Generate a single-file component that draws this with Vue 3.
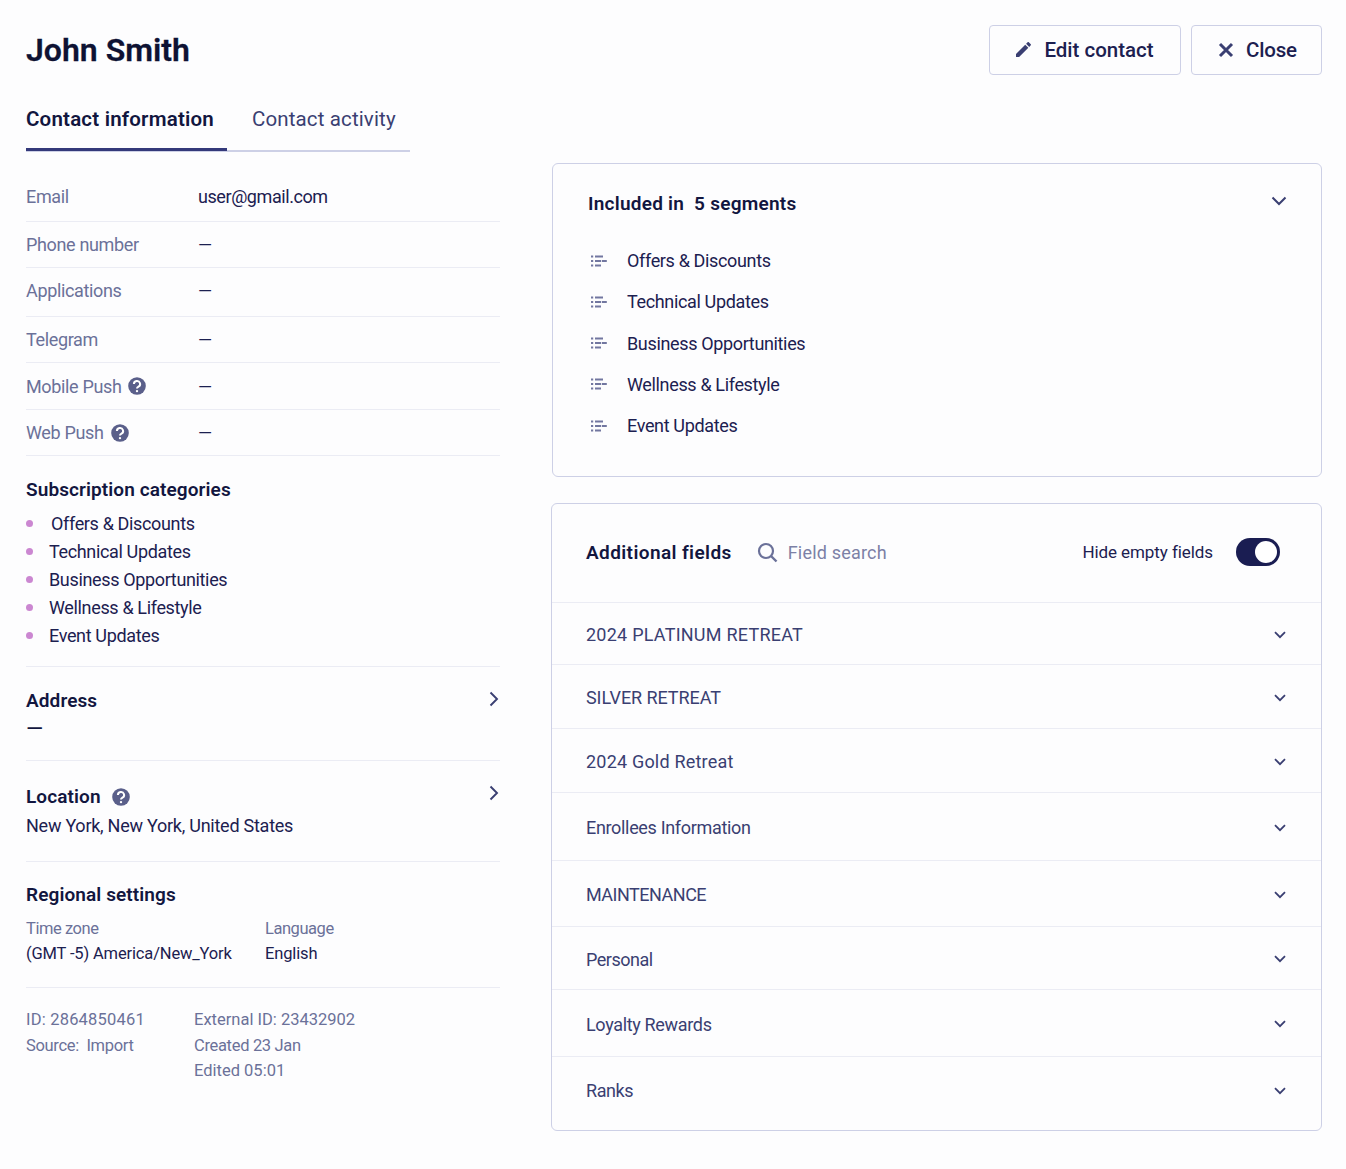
<script setup>
const rows = [
  { label: 'Email', value: 'user@gmail.com', h: 48, pb: 2 },
  { label: 'Phone number', value: '—', h: 46, pb: 0 },
  { label: 'Applications', value: '—', h: 49, pb: 3 },
  { label: 'Telegram', value: '—', h: 46, pb: 0 },
  { label: 'Mobile Push', value: '—', h: 47, pb: 0, help: true },
  { label: 'Web Push', value: '—', h: 46, pb: 0, help: true }
]
const cats = ['Offers & Discounts', 'Technical Updates', 'Business Opportunities', 'Wellness & Lifestyle', 'Event Updates']
const fields = [
  { t: '2024 PLATINUM RETREAT', h: 62, ls: 0.24 },
  { t: 'SILVER RETREAT', h: 64, ls: -0.07 },
  { t: '2024 Gold Retreat', h: 64, ls: 0.2 },
  { t: 'Enrollees Information', h: 68, ls: -0.33 },
  { t: 'MAINTENANCE', h: 66, ls: -0.5 },
  { t: 'Personal', h: 63, ls: -0.5 },
  { t: 'Loyalty Rewards', h: 67, ls: -0.33 },
  { t: 'Ranks', h: 74, ls: -0.4 }
]
</script>

<template>
  <div class="page">
    <header class="top">
      <h1>John Smith</h1>
      <div class="actions">
        <button class="btn edit">
          <svg width="15" height="15" viewBox="3 3 18 18"><path fill="#3a3f72" d="M3 17.25V21h3.75L17.81 9.94l-3.75-3.75L3 17.25zM20.71 7.04c.39-.39.39-1.02 0-1.41l-2.34-2.34c-.39-.39-1.02-.39-1.41 0l-1.83 1.83 3.75 3.75 1.83-1.83z"/></svg>
          Edit contact
        </button>
        <button class="btn close">
          <svg width="16" height="16" viewBox="0 0 16 16"><path d="M2 2l12 12M14 2L2 14" stroke="#3a3f72" stroke-width="3" fill="none"/></svg>
          Close
        </button>
      </div>
    </header>

    <div class="cols">
      <section class="left">
        <nav class="tabs">
          <span class="tab active">Contact information</span>
          <span class="tab">Contact activity</span>
        </nav>

        <div class="rows">
          <div v-for="r in rows" :key="r.label" class="row" :style="{ height: r.h + 'px', paddingBottom: r.pb + 'px' }">
            <span class="label">{{ r.label }}
              <svg v-if="r.help" class="help" width="18" height="18" viewBox="0 0 18 18"><circle cx="9" cy="9" r="8.8" fill="#5a5f8a"/><path d="M5.9 7a3.1 3 0 1 1 4.6 2.6c-1 .6-1.5 1-1.5 2" fill="none" stroke="#fff" stroke-width="2"/><circle cx="9" cy="14.1" r="1.2" fill="#fff"/></svg>
            </span>
            <span class="value">{{ r.value }}</span>
          </div>
        </div>

        <div class="subs">
          <h3>Subscription categories</h3>
          <ul>
            <li v-for="c in cats" :key="c"><i class="dot"></i>{{ c }}</li>
          </ul>
        </div>

        <div class="block address">
          <div class="block-head">
            <h3>Address</h3>
            <svg class="arrow ad" width="10" height="16" viewBox="0 0 10 16"><path d="M1.5 1.5L8 8l-6.5 6.5" fill="none" stroke="#3a3f72" stroke-width="1.9"/></svg>
          </div>
          <div class="dash">—</div>
        </div>

        <div class="block location">
          <div class="block-head">
            <h3>Location
              <svg class="help" width="18" height="18" viewBox="0 0 18 18"><circle cx="9" cy="9" r="8.8" fill="#5a5f8a"/><path d="M5.9 7a3.1 3 0 1 1 4.6 2.6c-1 .6-1.5 1-1.5 2" fill="none" stroke="#fff" stroke-width="2"/><circle cx="9" cy="14.1" r="1.2" fill="#fff"/></svg>
            </h3>
            <svg class="arrow up" width="10" height="16" viewBox="0 0 10 16"><path d="M1.5 1.5L8 8l-6.5 6.5" fill="none" stroke="#3a3f72" stroke-width="1.9"/></svg>
          </div>
          <div class="loc">New York, New York, United States</div>
        </div>

        <div class="block regional">
          <h3>Regional settings</h3>
          <div class="reg-grid">
            <div><div class="small-label">Time zone</div><div class="small-value">(GMT -5) America/New_York</div></div>
            <div><div class="small-label">Language</div><div class="small-value">English</div></div>
          </div>
        </div>

        <div class="meta">
          <div class="meta-col first"><div class="wide">ID: 2864850461</div><div class="tight">Source: &nbsp;Import</div></div>
          <div class="meta-col"><div>External ID: 23432902</div><div class="tight">Created 23 Jan</div><div>Edited 05:01</div></div>
        </div>
      </section>

      <section class="right">
        <div class="card segments">
          <div class="seg-head">
            <h3>Included in &nbsp;5 segments</h3>
            <svg width="16" height="10" viewBox="0 0 16 10"><path d="M1.5 1.5L8 8l6.5-6.5" fill="none" stroke="#3a3f72" stroke-width="2"/></svg>
          </div>
          <ul class="seg-list">
            <li v-for="c in cats" :key="c">
              <svg width="16" height="12" viewBox="0 0 16 12" fill="#7277a0"><rect x="0" y="0.5" width="2.2" height="2"/><rect x="0" y="5" width="2.2" height="2"/><rect x="0" y="9.5" width="2.2" height="2"/><rect x="4" y="0.5" width="8" height="2"/><rect x="4" y="5" width="6" height="2"/><rect x="10.8" y="5" width="5" height="2"/><rect x="4" y="9.5" width="6" height="2"/></svg>
              {{ c }}
            </li>
          </ul>
        </div>

        <div class="card fields">
          <div class="f-head">
            <h3>Additional fields</h3>
            <svg class="search" width="21" height="21" viewBox="0 0 21 21"><circle cx="9" cy="9" r="7" fill="none" stroke="#6b7199" stroke-width="2.2"/><path d="M14 14l5.5 5.5" stroke="#6b7199" stroke-width="2.4"/></svg>
            <span class="placeholder">Field search</span>
            <span class="hide">Hide empty fields</span>
            <span class="toggle"><span class="knob"></span></span>
          </div>
          <div v-for="(f, i) in fields" :key="f.t" class="f-row" :class="{ last: i === fields.length - 1 }" :style="{ height: f.h + 'px', letterSpacing: f.ls + 'px' }">
            <span>{{ f.t }}</span>
            <svg width="12" height="8" viewBox="0 0 12 8"><path d="M1 1.2l5 5 5-5" fill="none" stroke="#3a3f72" stroke-width="1.8"/></svg>
          </div>
        </div>
      </section>
    </div>
  </div>
</template>

<style>
body { background: #fdfdfe; }
</style>

<style scoped>
.page {
  width: 1346px;
  height: 1169px;
  box-sizing: border-box;
  padding: 25px 24px 0 26px;
  font-family: Roboto, "Noto Sans", sans-serif;
  color: #12163f;
  font-size: 18px;
  letter-spacing: -0.35px;
  overflow: hidden;
}
h1, h3, ul { margin: 0; padding: 0; }
li { list-style: none; }
.top { display: flex; justify-content: space-between; align-items: center; height: 49px; }
h1 { font-size: 32px; font-weight: 600; color: #0e1233; letter-spacing: 0; -webkit-text-stroke: 0.3px #0e1233; }
.actions { display: flex; gap: 10px; }
.btn {
  height: 50px;
  box-sizing: border-box;
  border: 1.5px solid #cdd0e6;
  border-radius: 4px;
  background: transparent;
  color: #1c2050;
  font: 500 20.5px Roboto, "Noto Sans", sans-serif;
  display: flex;
  align-items: center;
  justify-content: center;
  gap: 13px;
}
.edit { width: 192px; }
.close { width: 131px; gap: 12px; padding-left: 8px; letter-spacing: -0.2px; }

.cols { display: grid; grid-template-columns: 474px 770px; column-gap: 52px; }
.left { padding-top: 25px; }
.right { padding-top: 89px; display: flex; flex-direction: column; gap: 26px; }

.tabs {
  display: flex;
  width: 384px;
  height: 51px;
  border-bottom: 2px solid #cdd0e6;
  box-sizing: content-box;
  align-items: flex-start;
}
.tab { font-size: 20.5px; color: #3a3f72; height: 51px; line-height: 40px; padding-left: 25px; letter-spacing: 0.13px; }
.tab.active { font-weight: 600; color: #12163f; width: 201px; box-sizing: border-box; padding-left: 0; border-bottom: 3px solid #34397a; height: 52px; letter-spacing: 0.2px; }

.rows { padding-top: 22px; }
.row { display: flex; align-items: center; border-bottom: 1.5px solid #ebecf4; box-sizing: border-box; }
.label { width: 172px; flex: none; color: #6b7199; display: flex; align-items: center; gap: 7px; }
.value { color: #1c2050; letter-spacing: -0.43px; }

.subs { padding-top: 22px; height: 211px; box-sizing: border-box; border-bottom: 1.5px solid #ebecf4; }
h3 { font-size: 19px; font-weight: 600; color: #12163f; letter-spacing: 0.1px; }
.subs ul { margin-top: 8px; }
.subs li { height: 28px; display: flex; align-items: center; color: #1c2050; }
.dot { width: 7px; height: 7px; border-radius: 50%; background: #cb87d1; margin-right: 16px; }
.subs li:first-child .dot { margin-right: 18px; }

.block { border-bottom: 1.5px solid #ebecf4; box-sizing: border-box; }
.block-head { display: flex; justify-content: space-between; align-items: center; }
.address { height: 94px; padding-top: 22px; }
.dash { margin-top: 6px; font-size: 22px; line-height: 21px; letter-spacing: 0; }
.location { height: 101px; padding-top: 24px; }
.location h3 { display: flex; align-items: center; gap: 11px; }
.arrow { margin-right: 1px; }
.arrow.ad { margin-top: -3px; }
.arrow.up { margin-top: -7px; }
.loc { margin-top: 7px; color: #1c2050; letter-spacing: -0.25px; }
.regional { height: 126px; padding-top: 21px; }
.reg-grid { display: grid; grid-template-columns: 239px 1fr; margin-top: 10px; font-size: 16.5px; }
.small-label { color: #6b7199; line-height: 25px; letter-spacing: -0.45px; }
.small-value { color: #1c2050; line-height: 25px; letter-spacing: -0.15px; }

.meta { display: flex; padding-top: 19px; font-size: 16.5px; color: #6b7199; line-height: 25.5px; letter-spacing: 0; }
.meta-col.first { width: 168px; }
.wide { letter-spacing: 0.2px; }
.tight { letter-spacing: -0.32px; }

.card { border: 1.5px solid #cdd0e6; border-radius: 6px; box-sizing: border-box; }
.segments { height: 314px; padding: 26px 34px 0 35px; }
.seg-head { display: flex; justify-content: space-between; align-items: center; height: 26px; }
.seg-head h3 { letter-spacing: 0.25px; }
.seg-head svg { margin-top: -4px; }
.seg-list { margin-top: 24px; }
.seg-list li { height: 41.25px; display: flex; align-items: center; gap: 20px; color: #1c2050; padding-left: 3px; }

.fields { height: 628px; margin-left: -1px; width: 771px; }
.f-head { height: 99px; display: flex; align-items: center; padding: 0 41px 2px 34px; box-sizing: border-box; border-bottom: 1.5px solid #ebecf4; }
.f-head h3 { letter-spacing: 0.4px; }
.search { margin-left: 25px; }
.placeholder { margin-left: 10px; color: #7c81a6; letter-spacing: 0.2px; }
.hide { margin-left: auto; font-size: 17px; color: #1c2050; letter-spacing: -0.08px; }
.toggle { margin-left: 23px; width: 44px; height: 28px; border-radius: 14px; background: #1a1d52; position: relative; flex: none; }
.knob { position: absolute; right: 3px; top: 3px; width: 22px; height: 22px; border-radius: 50%; background: #fff; }
.f-row { display: flex; align-items: center; justify-content: space-between; padding: 2px 35px 0 34px; border-bottom: 1.5px solid #ebecf4; box-sizing: border-box; color: #3a3f72; }
.f-row.last { border-bottom: none; padding-top: 0; padding-bottom: 7px; }
</style>
